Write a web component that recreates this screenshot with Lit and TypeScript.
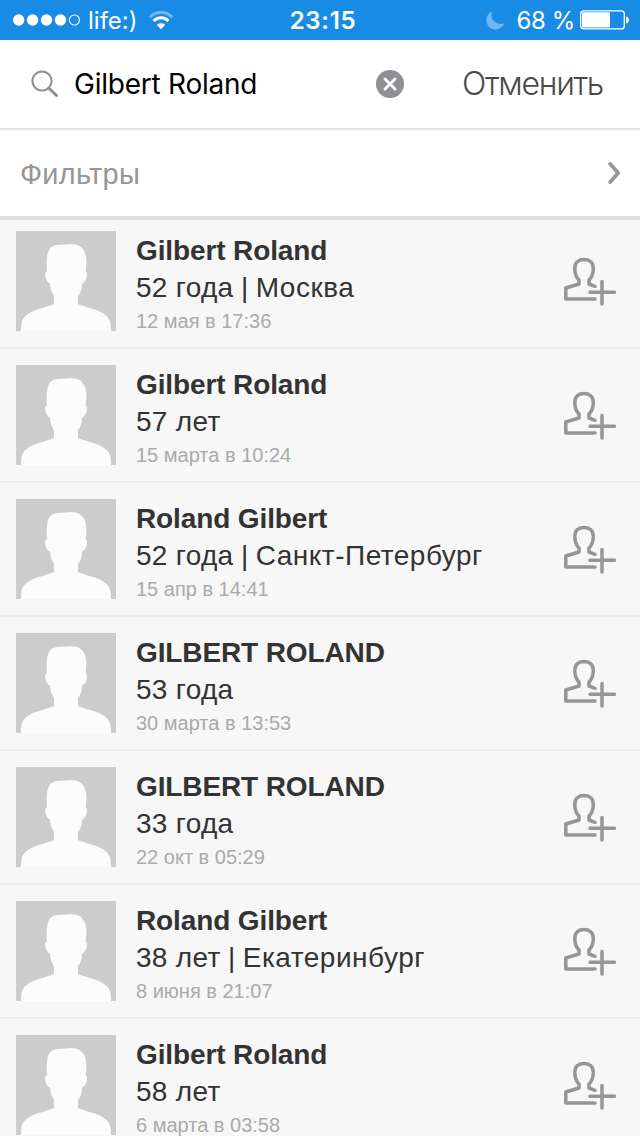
import { LitElement, html, svg, css, nothing } from "lit";
import { customElement, property } from "lit/decorators.js";

interface Person {
  name: string;
  age: string;
  city?: string;
  date: string;
}

const people: Person[] = [
  { name: "Gilbert Roland", age: "52 года", city: "Москва", date: "12 мая в 17:36" },
  { name: "Gilbert Roland", age: "57 лет", date: "15 марта в 10:24" },
  { name: "Roland Gilbert", age: "52 года", city: "Санкт-Петербург", date: "15 апр в 14:41" },
  { name: "GILBERT ROLAND", age: "53 года", date: "30 марта в 13:53" },
  { name: "GILBERT ROLAND", age: "33 года", date: "22 окт в 05:29" },
  { name: "Roland Gilbert", age: "38 лет", city: "Екатеринбург", date: "8 июня в 21:07" },
  { name: "Gilbert Roland", age: "58 лет", date: "6 марта в 03:58" },
];

@customElement("status-bar")
export class StatusBar extends LitElement {
  static styles = css`
    :host {
      display: grid;
      grid-template-columns: 1fr auto 1fr;
      align-items: center;
      height: 40px;
      padding: 0 11px 0 13px;
      box-sizing: border-box;
      background: #188ce5;
      color: #fff;
      font: 24px/38px Inter, "Liberation Sans", sans-serif;
      white-space: nowrap;
    }
    svg { display: block; flex: none; }
    span { padding-top: 2px; }
    .left, .right { display: flex; align-items: center; }
    .right { justify-content: flex-end; }
    .carrier { margin-left: 8px; }
    .wifi { margin-left: 12px; }
    .time { padding-left: 4px; font-weight: 600; letter-spacing: 0.7px; }
    .percent { margin: 0 5px 0 12px; letter-spacing: -0.4px; }
  `;

  render() {
    return html`
      <div class="left">
        <svg width="67" height="12" viewBox="0 0 67 12" fill="#fff">
          ${[5.7, 19.6, 33.5, 47.5].map((x) => svg`<circle cx=${x} cy="6" r="5.7" />`)}
          <circle cx="61.4" cy="6" r="5" fill="none" stroke="#fff" stroke-width="1.1" />
        </svg>
        <span class="carrier">life:)</span>
        <svg class="wifi" width="24" height="19" viewBox="0 0 24 19" fill="none" stroke="#fff" stroke-width="2.9">
          <path d="M1 6.2C7-.2 17-.2 23 6.2" opacity=".4" />
          <path d="M4.6 10.1C8.8 5.7 15.2 5.7 19.4 10.1" />
          <path d="M12 18.2L7.8 14C10.2 11.6 13.8 11.6 16.2 14Z" fill="#fff" stroke="none" />
        </svg>
      </div>
      <span class="time">23:15</span>
      <div class="right">
        <svg width="19" height="19" viewBox="0 0 19 19">
          <path d="M6 .6C3.6 8.5 9.5 14.3 18.4 12.5C14.5 20 6 20 2.4 15.2C-1.4 10 .3 3 6 .6Z" fill="#6fb8f2" />
        </svg>
        <span class="percent">68 %</span>
        <svg width="49" height="20" viewBox="0 0 49 20">
          <rect x=".7" y=".9" width="43.6" height="18" rx="3" fill="none" stroke="#fff" stroke-width="1.3" />
          <rect x="2" y="2.3" width="28" height="15.2" rx="1.2" fill="#fff" />
          <path d="M46 6.5Q49 7.2 49 10T46 13.5Z" fill="#fff" />
        </svg>
      </div>
    `;
  }
}

@customElement("search-bar")
export class SearchBar extends LitElement {
  static styles = css`
    :host {
      display: flex;
      align-items: center;
      height: 90px;
      box-sizing: border-box;
      padding: 0 37px 0 31px;
      border-bottom: 2px solid #e5e5e5;
      background: #fff;
      white-space: nowrap;
    }
    svg { display: block; flex: none; }
    .query {
      flex: 1;
      margin-left: 15px;
      color: #000;
      font: 28px/40px Inter, "Liberation Sans", sans-serif;
      letter-spacing: -0.24px;
    }
    .cancel {
      margin-left: 58px;
      color: #4a4a4a;
      font: 300 32px/40px Inter, "Liberation Sans", sans-serif;
      letter-spacing: -1.28px;
    }
  `;

  render() {
    return html`
      <svg width="28" height="28" viewBox="0 0 28 28" fill="none" stroke="#8e8e93" stroke-linecap="round">
        <circle cx="11" cy="11" r="9.6" stroke-width="2" />
        <path d="M18 18.2L25.5 25.5" stroke-width="2.9" />
      </svg>
      <span class="query">Gilbert Roland</span>
      <svg width="28" height="28" viewBox="0 0 28 28">
        <circle cx="14" cy="14" r="14" fill="#8e8e93" />
        <path d="M9 9L19 19M19 9L9 19" stroke="#fff" stroke-width="2.9" stroke-linecap="round" />
      </svg>
      <span class="cancel">Отменить</span>
    `;
  }
}

@customElement("person-row")
export class PersonRow extends LitElement {
  @property({ attribute: false }) person!: Person;

  static styles = css`
    :host {
      display: flex;
      height: 134px;
      box-sizing: border-box;
      padding: 16px 24px 16px 16px;
      border-bottom: 2px solid #ebebeb;
      background: #f7f7f7;
      font-family: "Liberation Sans", Arial, sans-serif;
      white-space: nowrap;
    }
    svg { display: block; flex: none; }
    .text { flex: 1; margin-left: 20px; }
    .name { padding-top: 1px; font-size: 28px; font-weight: 700; line-height: 38px; color: #333; letter-spacing: -0.12px; }
    .info { font-size: 28px; line-height: 36px; color: #333; letter-spacing: -0.2px; }
    .age { letter-spacing: 0.3px; }
    .city { letter-spacing: 0.5px; }
    .date { font-size: 20px; line-height: 30px; color: #aaa; }
    .add { margin-top: 25px; }
  `;

  render() {
    const { name, age, city, date } = this.person;
    return html`
      <svg width="100" height="100" viewBox="0 0 100 100">
        <rect width="100" height="100" fill="#ccc" />
        <path
          d="M5 100C5 91 6 87 12 83C19 78 30 76.5 38 73V65C36 62 34 58 34 52.5C31 52 29 46 29 43Q29 41 31 40.5C30 27 31 17 38 14.8C42 13.2 46 14 50 13.5C61 12.5 66 14.5 69 22C71 27 70.5 34 69.7 40.5Q71 41 71 43C71 47 69 52 66 52.5C66 58 64.5 62 62 65V73C70 76.5 81 78 88 83C94 87 95 91 95 100Z"
          fill="#fcfcfc"
        />
      </svg>
      <div class="text">
        <div class="name">${name}</div>
        <div class="info"><span class="age">${age}</span>${city ? html` | <span class="city">${city}</span>` : nothing}</div>
        <div class="date">${date}</div>
      </div>
      <svg class="add" width="54" height="52" viewBox="0 0 54 52" fill="none" stroke="#969696" stroke-width="3.5" stroke-linecap="round" stroke-linejoin="round">
        <path d="M33 43H3.8V32L17 28V24C13 20 12.8 16 12.8 12.5C12.8 6 17 3.5 22 3.5S31.3 6 31.3 12.5C31.3 16 31 20 27 24V28L33 30.3" />
        <path d="M28 36.3H52.5M40 25.5V48" />
      </svg>
    `;
  }
}

@customElement("app-root")
export class AppRoot extends LitElement {
  static styles = css`
    :host {
      display: flex;
      flex-direction: column;
      height: 1136px;
      overflow: hidden;
      background: #f7f7f7;
    }
    status-bar, search-bar, .filters, person-row { flex: none; }
    .filters {
      display: flex;
      align-items: center;
      justify-content: space-between;
      height: 90px;
      box-sizing: border-box;
      padding: 0 19px 0 20px;
      border-bottom: 4px solid #e0e0e0;
      background: #fff;
      color: #969696;
      font: 29px/40px "Liberation Sans", Arial, sans-serif;
    }
    .label { padding-top: 2px; letter-spacing: 0.25px; }
    .list { flex: 1; min-height: 0; overflow: hidden; }
    .first { height: 129px; padding-top: 11px; }
  `;

  render() {
    return html`
      <status-bar></status-bar>
      <search-bar></search-bar>
      <div class="filters">
        <span class="label">Фильтры</span>
        <svg width="14" height="24" viewBox="0 0 14 24" fill="none" stroke="#969696" stroke-width="3.8" stroke-linecap="round" stroke-linejoin="round">
          <path d="M3.2 3L11.2 12L3.2 21" />
        </svg>
      </div>
      <div class="list">
        ${people.map((p, i) => html`<person-row class=${i === 0 ? "first" : ""} .person=${p}></person-row>`)}
      </div>
    `;
  }
}
